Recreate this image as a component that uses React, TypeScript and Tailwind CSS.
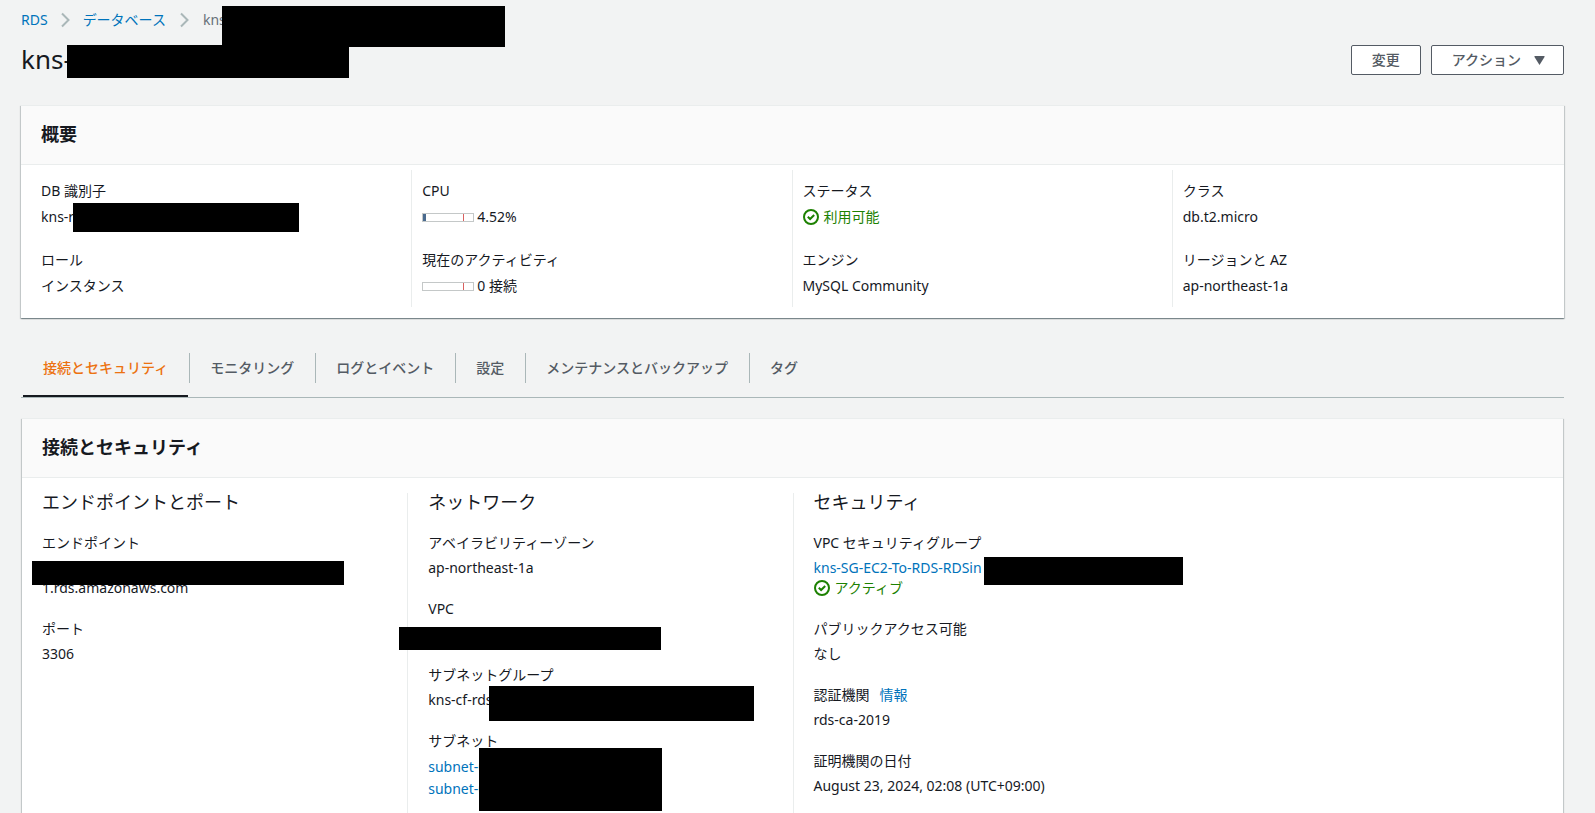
import type { ReactNode } from "react";

const cardShadow =
  "border-t border-[#eaeded] bg-white shadow-[0_1px_1px_0_rgba(0,28,36,0.3),1px_1px_1px_0_rgba(0,28,36,0.15),-1px_1px_1px_0_rgba(0,28,36,0.15)]";

function Mask({ className }: { className: string }) {
  return <span aria-hidden="true" className={`absolute bg-black ${className}`} />;
}

function Chevron() {
  return (
    <svg width="9" height="16" viewBox="0 0 9 16" fill="none" stroke="#aab7b8" strokeWidth="2" aria-hidden="true">
      <path d="M1 1.5 7.5 8 1 14.5" />
    </svg>
  );
}

function Status({ children }: { children: ReactNode }) {
  return (
    <span className="flex items-center gap-[5px] text-[#1d8102]">
      <svg width="16" height="16" viewBox="0 0 16 16" fill="none" stroke="currentColor" strokeWidth="2" aria-hidden="true">
        <circle cx="8" cy="8" r="7" />
        <path d="m4.8 7.8 2.3 2.2 4.1-4" />
      </svg>
      {children}
    </span>
  );
}

function Gauge({ percent, children }: { percent: number; children: ReactNode }) {
  return (
    <span className="flex items-center gap-[3px]">
      <span className="relative flex h-[9px] w-[52px] border border-[#c4c8c8]">
        <span className="bg-[#4a6b8f]" style={{ width: `${percent}%` }} />
        <span className="absolute inset-y-0 left-10 w-px bg-[#d9605f]" />
      </span>
      {children}
    </span>
  );
}

function Link({ children }: { children: ReactNode }) {
  return (
    <a href="#" className="text-[#0073bb] hover:underline">
      {children}
    </a>
  );
}

function SummaryItem({ label, children }: { label: string; children: ReactNode }) {
  return (
    <div className="leading-[22px]">
      <dt>{label}</dt>
      <dd className="relative mt-1">{children}</dd>
    </div>
  );
}

function DetailItem({ label, children }: { label: ReactNode; children: ReactNode }) {
  return (
    <div>
      <dt className="leading-5">{label}</dt>
      <dd className="relative mt-[5px] min-h-5 leading-5">{children}</dd>
    </div>
  );
}

function SummaryColumn({ children }: { children: ReactNode }) {
  return (
    <dl className="flex flex-col gap-[21px] border-l border-[#eaeded] p-[10px] first:border-l-0">{children}</dl>
  );
}

function DetailColumn({ title, children }: { title: string; children: ReactNode }) {
  return (
    <section className="border-l border-[#eaeded] pl-5 first:border-l-0">
      <h3 className="mb-[22px] text-lg leading-[18px]">{title}</h3>
      <dl className="flex flex-col gap-[21px]">{children}</dl>
    </section>
  );
}

function CardHeader({ children }: { children: ReactNode }) {
  return (
    <header className="border-b border-[#eaeded] bg-[#fafafa] px-5 pt-[17px] pb-[19px]">
      <h2 className="text-lg leading-[22px] font-bold">{children}</h2>
    </header>
  );
}

const tabs = ["接続とセキュリティ", "モニタリング", "ログとイベント", "設定", "メンテナンスとバックアップ", "タグ"];

export default function App() {
  return (
    <main
      lang="ja"
      className="flex min-h-screen flex-col bg-[#f2f3f3] pr-[31px] pl-[21px] font-['Noto_Sans','Noto_Sans_CJK_JP',sans-serif] text-sm text-[#16191f]"
    >
      <nav aria-label="パンくずリスト" className="pt-[10px]">
        <ol className="flex items-center gap-[13px] leading-5">
          <li><Link>RDS</Link></li>
          <li><Chevron /></li>
          <li className="pr-px"><Link>データベース</Link></li>
          <li><Chevron /></li>
          <li className="relative ml-px text-[#687078]">
            kns
            <Mask className="top-[-4px] left-[19px] h-[41px] w-[283px]" />
          </li>
        </ol>
      </nav>

      <div className="mt-[10px] flex items-center justify-between">
        <h1 className="relative pb-[2px] text-[26px] leading-[38px]">
          kns-
          <Mask className="top-[5px] left-[46px] h-[33px] w-[282px]" />
        </h1>
        <div className="flex gap-[10px] font-medium text-[#545b64]">
          <button type="button" className="h-[30px] rounded-[2px] border border-[#545b64] bg-white px-5">変更</button>
          <button type="button" className="flex h-[30px] items-center gap-[13px] rounded-[2px] border border-[#545b64] bg-white pr-[18px] pl-5">
            アクション
            <svg width="11" height="9" viewBox="0 0 10 9" fill="currentColor" aria-hidden="true">
              <path d="M0 0h10v1L5 9 0 1z" />
            </svg>
          </button>
        </div>
      </div>

      <section className={`mt-[25px] ${cardShadow}`}>
        <CardHeader>概要</CardHeader>
        <div className="grid grid-cols-4 pt-[5px] pr-3 pb-[11px] pl-[10px]">
          <SummaryColumn>
            <SummaryItem label="DB 識別子">
              kns-r
              <Mask className="top-[-3px] left-8 h-[29px] w-[226px]" />
            </SummaryItem>
            <SummaryItem label="ロール">インスタンス</SummaryItem>
          </SummaryColumn>
          <SummaryColumn>
            <SummaryItem label="CPU"><Gauge percent={4.52}>4.52%</Gauge></SummaryItem>
            <SummaryItem label="現在のアクティビティ"><Gauge percent={0}>0 接続</Gauge></SummaryItem>
          </SummaryColumn>
          <SummaryColumn>
            <SummaryItem label="ステータス"><Status>利用可能</Status></SummaryItem>
            <SummaryItem label="エンジン">MySQL Community</SummaryItem>
          </SummaryColumn>
          <SummaryColumn>
            <SummaryItem label="クラス">db.t2.micro</SummaryItem>
            <SummaryItem label="リージョンと AZ">ap-northeast-1a</SummaryItem>
          </SummaryColumn>
        </div>
      </section>

      <div role="tablist" className="mt-[35px] flex gap-px border-b border-[#aab7b8] pl-[2px]">
        {tabs.map((tab, i) => (
          <div key={tab} className="relative flex items-start">
            {i > 0 && <span className="h-[30px] w-px bg-[#aab7b8]" />}
            <button
              type="button"
              role="tab"
              aria-selected={i === 0}
              className={
                i === 0
                  ? "h-11 border-b-2 border-[#16191f] px-5 pb-[13px] font-medium text-[#ec7211]"
                  : "h-11 px-5 pb-[15px] font-medium text-[#545b64]"
              }
            >
              {tab}
            </button>
          </div>
        ))}
      </div>

      <section className={`mx-px mt-5 flex grow flex-col ${cardShadow}`}>
        <CardHeader>接続とセキュリティ</CardHeader>
        <div className="grid grow grid-cols-4 pt-[15px]">
          <DetailColumn title="エンドポイントとポート">
            <DetailItem label="エンドポイント">
              <span className="block h-5" />
              1.rds.amazonaws.com
              <Mask className="top-[3px] left-[-10px] h-6 w-[312px]" />
            </DetailItem>
            <DetailItem label="ポート">3306</DetailItem>
          </DetailColumn>
          <DetailColumn title="ネットワーク">
            <DetailItem label="アベイラビリティーゾーン">ap-northeast-1a</DetailItem>
            <DetailItem label="VPC">
              <Mask className="top-[3px] left-[-29px] h-[23px] w-[262px]" />
            </DetailItem>
            <DetailItem label="サブネットグループ">
              kns-cf-rds
              <Mask className="top-[-4px] left-[61px] h-[35px] w-[265px]" />
            </DetailItem>
            <DetailItem label="サブネット">
              <span className="flex flex-col leading-[22px]">
                <Link>subnet-0</Link>
                <Link>subnet-0</Link>
              </span>
              <Mask className="top-[-8px] left-[51px] h-[63px] w-[183px]" />
            </DetailItem>
          </DetailColumn>
          <DetailColumn title="セキュリティ">
            <DetailItem label="VPC セキュリティグループ">
              <Link>kns-SG-EC2-To-RDS-RDSin</Link>
              <Status>アクティブ</Status>
              <Mask className="top-[-1px] left-[170px] h-7 w-[199px]" />
            </DetailItem>
            <DetailItem label="パブリックアクセス可能">なし</DetailItem>
            <DetailItem label={<span className="flex gap-[10px]">認証機関 <Link>情報</Link></span>}>rds-ca-2019</DetailItem>
            <DetailItem label="証明機関の日付">August 23, 2024, 02:08 (UTC+09:00)</DetailItem>
          </DetailColumn>
        </div>
      </section>
    </main>
  );
}
